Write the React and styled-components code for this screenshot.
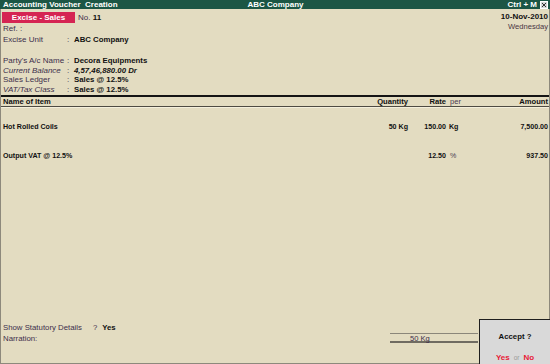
import React from "react";
import styled, { createGlobalStyle } from "styled-components";

const Global = createGlobalStyle`
  html, body { margin: 0; padding: 0; }
  body { font-family: "Liberation Sans", Arial, sans-serif; background: #e3dcc1; }
`;

const Screen = styled.div`
  position: relative;
  width: 550px;
  height: 364px;
  display: flex;
  flex-direction: column;
  background: #e3dcc1;
  overflow: hidden;
  color: #111;
`;

const TitleBar = styled.div`
  height: 9px;
  background: #1c5645;
  color: #fff;
  font-weight: bold;
  font-size: 8px;
  line-height: 9px;
  display: grid;
  grid-template-columns: 1fr auto 1fr;
  padding: 0 2px 0 3px;
  white-space: pre;
`;

const TitleRight = styled.div`
  display: flex;
  justify-content: flex-end;
  align-items: center;
  gap: 3px;
`;

const Body = styled.div`
  flex: 1;
  display: flex;
  flex-direction: column;
  border: 1px solid #8d897c;
  border-top: none;
`;

const Head = styled.div`
  display: flex;
  justify-content: space-between;
  padding: 3px 1px 0 1px;
`;

const HeadLeft = styled.div`
  display: flex;
  flex-direction: column;
`;

const VoucherLine = styled.div`
  display: flex;
  align-items: center;
  height: 11px;
`;

const VoucherType = styled.div`
  width: 73px;
  height: 11px;
  background: #d52453;
  color: #fff;
  font-weight: bold;
  font-size: 8px;
  line-height: 11px;
  text-align: center;
`;

const VoucherNo = styled.div`
  margin-left: 3px;
  font-size: 8px;
  color: #3d2f4c;
  b { color: #111; }
`;

const Field = styled.div`
  display: grid;
  grid-template-columns: 64px 7px auto;
  padding-left: 1px;
  height: ${(p) => p.$h || 9.7}px;
  line-height: ${(p) => p.$h || 9.7}px;
  margin-top: ${(p) => p.$mt || 0}px;
  font-size: 8px;
  white-space: nowrap;
`;

const Label = styled.span`
  color: #3d2f4c;
  font-style: ${(p) => (p.$italic ? "italic" : "normal")};
`;

const Colon = styled.span`
  color: #3d2f4c;
`;

const Value = styled.span`
  font-weight: bold;
  font-size: 7.8px;
  color: #111;
  font-style: ${(p) => (p.$italic ? "italic" : "normal")};
`;

const DateBlock = styled.div`
  display: flex;
  flex-direction: column;
  align-items: flex-end;
`;

const DateText = styled.div`
  font-weight: bold;
  font-size: 8px;
  line-height: 10px;
`;

const DayText = styled.div`
  font-size: 7.6px;
  line-height: 10px;
  color: #4a3543;
`;

const Grid = styled.div`
  display: grid;
  grid-template-columns: 1fr 60px 38px 32px 70px;
  padding: 0 1px 0 2px;
  align-items: center;
`;

const TableHead = styled(Grid)`
  border-top: 2px solid #141414;
  border-bottom: 1px solid #4e4b43;
  box-shadow: 0 1px 0 #f4efdc;
  height: 9.5px;
  line-height: 9.5px;
  font-size: 7.6px;
  font-weight: bold;
`;

const ItemRow = styled(Grid)`
  height: 10px;
  line-height: 10px;
  margin-top: ${(p) => p.$mt}px;
  font-size: 7.1px;
  font-weight: bold;
`;

const Cell = styled.div`
  text-align: ${(p) => (p.$right ? "right" : "left")};
  padding-left: ${(p) => p.$pl || 0}px;
  white-space: nowrap;
  font-weight: ${(p) => (p.$light ? "normal" : "inherit")};
  color: ${(p) => (p.$light ? "#4a3a52" : "inherit")};
`;

const Spacer = styled.div`
  flex: 1;
`;

const Footer = styled.div`
  display: flex;
  align-items: flex-start;
  padding-bottom: 19px;
`;

const FooterLeft = styled.div`
  flex: 1;
  display: flex;
  flex-direction: column;
  padding-left: 2px;
  font-size: 7.8px;
  color: #3d2f4c;
`;

const FooterLine = styled.div`
  height: 10.5px;
  line-height: 10.5px;
  white-space: pre;
  b { color: #111; }
`;

const Ask = styled.span`
  display: inline-block;
  margin-left: 11px;
  margin-right: 5px;
`;

const TotalBox = styled.div`
  width: 88px;
  margin-top: 10px;
  margin-right: 71px;
  height: 10px;
  line-height: 10px;
  border-top: 1px solid #8b877a;
  border-bottom: 2px solid #6f6b61;
  font-size: 7.6px;
  color: #3d2f4c;
  padding-left: 20px;
  box-sizing: border-box;
`;

const AcceptBox = styled.div`
  position: absolute;
  right: 0;
  bottom: 0;
  width: 70px;
  height: 44px;
  background: #d9d9d9;
  border: 1px solid #1e1e1e;
  border-right: none;
  border-bottom: none;
  display: flex;
  flex-direction: column;
  align-items: center;
`;

const AcceptTitle = styled.div`
  margin-top: 12px;
  font-size: 7.8px;
  font-weight: bold;
  line-height: 10px;
`;

const AcceptChoice = styled.div`
  margin-top: 11px;
  font-size: 8px;
  line-height: 10px;
  font-weight: bold;
  color: #e81a37;
  display: flex;
  gap: 4px;
  align-items: baseline;
`;

const Or = styled.span`
  font-weight: normal;
  font-size: 6.5px;
  color: #9b9b9b;
`;

const CloseIcon = () => (
  <svg width="8" height="8" viewBox="0 0 8 8">
    <rect x="0.5" y="0.5" width="7" height="7" fill="#d7d7d7" stroke="#fff" />
    <path d="M2 2 L6 6 M6 2 L2 6" stroke="#333" strokeWidth="1" />
  </svg>
);

export default function App() {
  return (
    <>
      <Global />
      <Screen>
        <TitleBar>
          <span>Accounting Voucher  Creation</span>
          <span>ABC Company</span>
          <TitleRight>
            <span>Ctrl + M</span>
            <CloseIcon />
          </TitleRight>
        </TitleBar>
        <Body>
          <Head>
            <HeadLeft>
              <VoucherLine>
                <VoucherType>Excise - Sales</VoucherType>
                <VoucherNo>
                  No. <b>11</b>
                </VoucherNo>
              </VoucherLine>
              <Field $h={10} $mt={1}>
                <Label>Ref. :</Label>
              </Field>
              <Field $h={10} $mt={1}>
                <Label>Excise Unit</Label>
                <Colon>:</Colon>
                <Value>ABC Company</Value>
              </Field>
              <Field $mt={11}>
                <Label>Party's A/c Name</Label>
                <Colon>:</Colon>
                <Value>Decora Equipments</Value>
              </Field>
              <Field>
                <Label $italic>Current Balance</Label>
                <Colon>:</Colon>
                <Value $italic>4,57,46,880.00 Dr</Value>
              </Field>
              <Field>
                <Label>Sales Ledger</Label>
                <Colon>:</Colon>
                <Value>Sales @ 12.5%</Value>
              </Field>
              <Field>
                <Label $italic>VAT/Tax Class</Label>
                <Colon>:</Colon>
                <Value>Sales @ 12.5%</Value>
              </Field>
            </HeadLeft>
            <DateBlock>
              <DateText>10-Nov-2010</DateText>
              <DayText>Wednesday</DayText>
            </DateBlock>
          </Head>
          <TableHead>
            <Cell>Name of Item</Cell>
            <Cell $right>Quantity</Cell>
            <Cell $right>Rate</Cell>
            <Cell $pl={4} $light>per</Cell>
            <Cell $right>Amount</Cell>
          </TableHead>
          <ItemRow $mt={15}>
            <Cell>Hot Rolled Coils</Cell>
            <Cell $right>50 Kg</Cell>
            <Cell $right>150.00</Cell>
            <Cell $pl={3}>Kg</Cell>
            <Cell $right>7,500.00</Cell>
          </ItemRow>
          <ItemRow $mt={19}>
            <Cell>Output VAT @ 12.5%</Cell>
            <Cell $right></Cell>
            <Cell $right>12.50</Cell>
            <Cell $pl={4} $light>%</Cell>
            <Cell $right>937.50</Cell>
          </ItemRow>
          <Spacer />
          <Footer>
            <FooterLeft>
              <FooterLine>
                Show Statutory Details<Ask>?</Ask>
                <b>Yes</b>
              </FooterLine>
              <FooterLine>Narration:</FooterLine>
            </FooterLeft>
            <TotalBox>50 Kg</TotalBox>
          </Footer>
        </Body>
        <AcceptBox>
          <AcceptTitle>Accept ?</AcceptTitle>
          <AcceptChoice>
            <span>Yes</span>
            <Or>or</Or>
            <span>No</span>
          </AcceptChoice>
        </AcceptBox>
      </Screen>
    </>
  );
}
